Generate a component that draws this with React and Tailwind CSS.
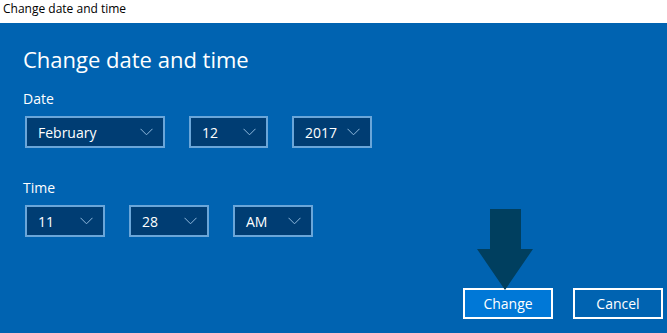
import React from "react";

function Chevron() {
  return (
    <svg width="13" height="8" viewBox="0 0 13 8" fill="none" className="shrink-0">
      <path d="M0.5 0.8 L6.5 6.8 L12.5 0.8" stroke="#8fb8dc" strokeWidth="1" />
    </svg>
  );
}

function Select({ value, width }) {
  return (
    <div
      className={`${width} h-[32px] flex items-center justify-between pl-[11px] pr-[10px] bg-[#003d73] border-2 border-[#6aa6d9] text-white text-[14px]`}
    >
      <span>{value}</span>
      <Chevron />
    </div>
  );
}

export default function App() {
  return (
    <div
      className="w-[667px] h-[333px] flex flex-col overflow-hidden"
      style={{ fontFamily: '"Open Sans", "Noto Sans", sans-serif' }}
    >
      <div className="h-[23px] bg-white text-black text-[12px] leading-[16px] pl-[3px] pt-[1px]">
        Change date and time
      </div>

      <div className="flex-1 bg-[#0063b1] relative pl-[23px] text-white">
        <h1 className="text-[22px] leading-[32px] pt-[20px] font-normal">Change date and time</h1>

        <div className="text-[14px] leading-[20px] mt-[14px]">Date</div>
        <div className="flex mt-[7px] ml-[2px] gap-[24px]">
          <Select value="February" width="w-[140px]" />
          <Select value="12" width="w-[79px]" />
          <Select value="2017" width="w-[80px]" />
        </div>

        <div className="text-[14px] leading-[20px] mt-[30px]">Time</div>
        <div className="flex mt-[7px] ml-[2px] gap-[24px]">
          <Select value="11" width="w-[80px]" />
          <Select value="28" width="w-[80px]" />
          <Select value="AM" width="w-[80px]" />
        </div>

        <div className="absolute right-[4px] bottom-[14px] flex gap-[20px]">
          <button className="w-[90px] h-[31px] bg-[#0078d7] border-2 border-white text-white text-[14px] leading-none">
            Change
          </button>
          <button className="w-[90px] h-[31px] bg-[#0063b1] border-2 border-white text-white text-[14px] leading-none">
            Cancel
          </button>
        </div>

        <svg
          className="absolute left-[476px] top-[186px]"
          width="58"
          height="82"
          viewBox="0 0 58 82"
        >
          <path d="M14 0 H45 V40 H57 L29 81 L1 40 H14 Z" fill="#003f5f" />
        </svg>
      </div>
    </div>
  );
}
